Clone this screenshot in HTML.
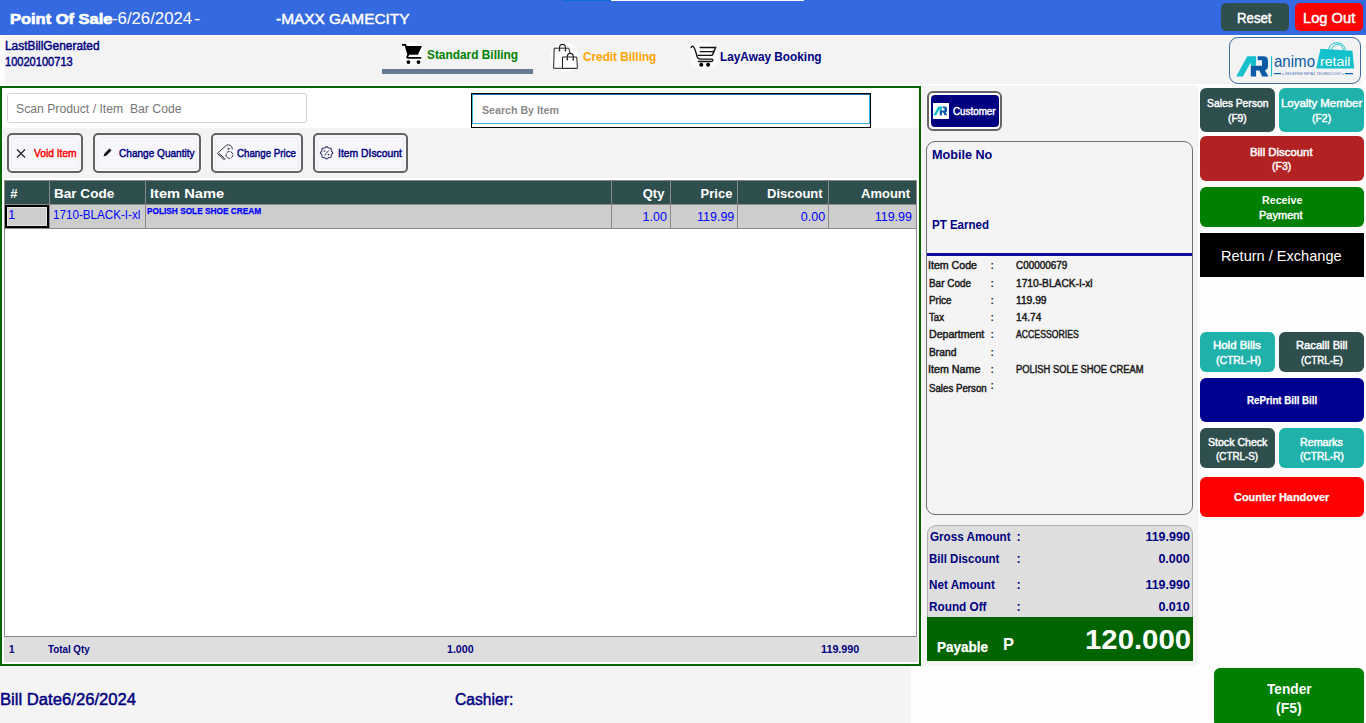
<!DOCTYPE html>
<html><head><meta charset="utf-8">
<style>
*{box-sizing:border-box}
html,body{margin:0;padding:0;width:1366px;height:723px;overflow:hidden;background:#fdfdfd;font-family:"Liberation Sans",sans-serif}
.a{position:absolute}
.t{position:absolute;line-height:1;white-space:pre}
.rb{position:absolute;border-radius:6px}
.ab{position:absolute;top:133px;height:40px;border:2px solid #636363;border-radius:5px;background:#f7f7fb}
.ab i{position:absolute;left:2px;right:2px;top:2px;bottom:2px;border-radius:3px;box-shadow:0 0 0 1px #eeeef2 inset}
</style></head><body>
<!-- header -->
<div class="a" style="left:0;top:0;width:1366px;height:35px;background:#3469e0"></div>
<div class="a" style="left:563px;top:0;width:48px;height:1px;background:#0b6fd2"></div>
<div class="a" style="left:611px;top:0;width:193px;height:1px;background:#fff"></div>
<div class="rb" style="left:1221px;top:3px;width:68px;height:28px;background:#2f4f4f;border-radius:5px"></div>
<div class="rb" style="left:1295px;top:3px;width:68px;height:28px;background:#ff0000;border-radius:5px"></div>
<!-- subheader -->
<div class="a" style="left:5px;top:37px;width:1356px;height:47px;background:#f3f3f3"></div>
<div class="a" style="left:382px;top:69px;width:151px;height:5px;background:#647b91"></div>
<!-- tab icons -->
<div class="a" style="left:400px;top:42px;width:24px;height:24px;border-radius:50%;background:#fbfbfb"></div>
<svg class="a" style="left:396px;top:40px" width="32" height="28" viewBox="0 0 32 28">
 <path d="M6 4.9H9.4L12.5 15" fill="none" stroke="#000" stroke-width="1.9" stroke-linejoin="round"/>
 <path d="M9.7 6H25.9L25.3 7.6L21.8 14.8H12.4Z" fill="#000"/>
 <path d="M12.4 14.6L11.3 16.6Q10.8 17.9 12.3 17.9H24.6" fill="none" stroke="#000" stroke-width="1.8" stroke-linecap="round"/>
 <circle cx="12.4" cy="22.1" r="1.9" fill="#000"/><circle cx="22.5" cy="22.1" r="1.9" fill="#000"/>
</svg>
<div class="a" style="left:550px;top:42px;width:30px;height:30px;border-radius:50%;background:#fbfbfb"></div>
<svg class="a" style="left:548px;top:40px" width="34" height="32" viewBox="0 0 34 32">
 <path d="M6.2 8.2H20.8L22 13M6.2 8.2L5.6 28.3H29" fill="none" stroke="#222" stroke-width="1"/>
 <path d="M11.5 10.5V8A3 3.6 0 0 1 17.5 8V10.5" fill="none" stroke="#222" stroke-width="1.1"/>
 <circle cx="11.5" cy="10.6" r="0.9" fill="#222"/><circle cx="17.4" cy="10.6" r="0.9" fill="#222"/>
 <path d="M14.5 17H28.8L29.4 28.3H14.5Z" fill="#fff" stroke="#222" stroke-width="1"/>
 <path d="M19.3 19.5V17A3 3.6 0 0 1 25.3 17V19.5" fill="none" stroke="#222" stroke-width="1.1"/>
 <circle cx="19.3" cy="19.6" r="0.9" fill="#222"/><circle cx="25.2" cy="19.6" r="0.9" fill="#222"/>
</svg>
<div class="a" style="left:690px;top:42px;width:28px;height:28px;border-radius:50%;background:#fbfbfb"></div>
<svg class="a" style="left:686px;top:40px" width="34" height="32" viewBox="0 0 34 32">
 <path d="M5.1 7.5Q6 5.6 7.2 6.5Q8.5 7.5 9.5 11L11.2 17Q12 19.2 14.5 19.2H25.8Q27 19.4 26.8 20.5Q26.5 21.5 25 21.5H12.4" fill="none" stroke="#111" stroke-width="1.3" stroke-linecap="round"/>
 <path d="M14.2 7.5H29.6L26.5 14.8Q26 15.4 25 15.4H12" fill="none" stroke="#111" stroke-width="1.4" stroke-linecap="round"/>
 <path d="M14.2 11.6H28" fill="none" stroke="#111" stroke-width="1.3" stroke-linecap="round"/>
 <circle cx="15.3" cy="24.8" r="2" fill="#000"/><circle cx="22.1" cy="24.8" r="2" fill="#000"/>
</svg>
<!-- logo box -->
<div class="a" style="left:1229px;top:37px;width:132px;height:47px;border:1.2px solid #3d6b9e;border-radius:9px;background:#f3f3f3"></div>
<svg class="a" style="left:1234px;top:42px" width="124" height="38" viewBox="0 0 124 38">
 <path d="M2.2 34.6L13.3 14.2H22.1V23.7H16.8V20.4L8.9 34.6Z" fill="#14c0cc"/>
 <path d="M23.7 14.2H29.5Q34 14.2 34 19V24Q34 27.5 31 28.3L34.4 34.6H28.2L25.4 28.5H22.1V34.6H16.8V23.7H28V18.2H23.7Z" fill="#0a5aa8"/>
 <rect x="37" y="14.2" width="1.1" height="20.4" fill="#14c0cc"/>
 <text x="40" y="25.4" font-family="Liberation Sans" font-size="16" fill="#0a5aa8" textLength="41" lengthAdjust="spacingAndGlyphs">animo</text>
 <path d="M86.5 6.7L118.5 8.8L120.1 26.5H82.2Z" fill="#14c0cc"/>
 <path d="M94.5 7.5Q96 0.8 103 0.8Q110 0.8 111.6 8.5M97.5 7.8Q99 2.5 103.5 2.5Q108.5 2.5 109.5 8.5" fill="none" stroke="#14c0cc" stroke-width="1"/>
 <text x="86" y="23.8" font-family="Liberation Sans" font-size="12.5" fill="#fff" textLength="30.5" lengthAdjust="spacingAndGlyphs">retail</text>
 <rect x="40" y="31" width="7" height="1.2" fill="#0a5aa8"/><rect x="111" y="31" width="8" height="1.2" fill="#0a5aa8"/>
 <text x="48" y="32.8" font-family="Liberation Sans" font-size="3.6" fill="#3d6fb8" textLength="62" lengthAdjust="spacingAndGlyphs">= REDEFINE RETAIL TECHNOLOGY =</text>
</svg>
<!-- main left panel -->
<div class="a" style="left:0;top:86px;width:921px;height:580px;border:2px solid #006400;background:#fff"></div>
<div class="a" style="left:3px;top:128px;width:916px;height:50px;background:#f3f3f3"></div>
<div class="a" style="left:7px;top:93px;width:300px;height:30px;border:1px solid #d2d2d2;border-radius:3px;background:#fff"></div>
<div class="a" style="left:471px;top:93px;width:400px;height:35px;border:1px solid #000;background:#fff"></div>
<div class="a" style="left:472px;top:94px;width:398px;height:30px;border:1px solid #3aaee0;border-top-color:#1f6fb0;background:#fff"></div>
<!-- action buttons -->
<div class="ab" style="left:7px;width:76px"><i></i></div>
<div class="ab" style="left:93px;width:108px"><i></i></div>
<div class="ab" style="left:211px;width:92px"><i></i></div>
<div class="ab" style="left:313px;width:95px"><i></i></div>
<svg class="a" style="left:16px;top:149px" width="10" height="9" viewBox="0 0 10 9"><path d="M1 0.5l8 8M9 0.5l-8 8" stroke="#222" stroke-width="1.2"/></svg>
<svg class="a" style="left:102px;top:148px" width="10" height="10" viewBox="0 0 10 10"><path d="M1.5 8.5l1-3 5-5 2 2-5 5z" fill="#111"/></svg>
<svg class="a" style="left:210px;top:135px" width="30" height="30" viewBox="0 0 30 30">
 <path d="M7.3 18.4L16.5 10.2Q18.5 9.2 20.6 10.6Q22.4 12 22.3 14.5" fill="none" stroke="#333" stroke-width="1"/>
 <path d="M7.3 18.4L14 24.6L15.6 23.3M9 18.3L14.3 23.2" fill="none" stroke="#333" stroke-width="1"/>
 <circle cx="19.4" cy="19.9" r="3.4" fill="none" stroke="#333" stroke-width="1" stroke-dasharray="3.2 1"/>
 <circle cx="18.5" cy="13.8" r="0.95" fill="#333"/>
</svg>
<svg class="a" style="left:312px;top:140px" width="28" height="26" viewBox="0 0 28 26">
 <path d="M14.60 6.50 L16.59 8.00 L19.05 8.35 L19.40 10.81 L20.90 12.80 L19.40 14.79 L19.05 17.25 L16.59 17.60 L14.60 19.10 L12.61 17.60 L10.15 17.25 L9.80 14.79 L8.30 12.80 L9.80 10.81 L10.15 8.35 L12.61 8.00Z" fill="none" stroke="#3a3a6e" stroke-width="1.1" stroke-linejoin="round"/>
 <path d="M12.4 15.4L16.8 10.4" stroke="#3a3a6e" stroke-width="1"/><circle cx="12.5" cy="11" r="0.85" fill="#3a3a6e"/><circle cx="16.5" cy="14.6" r="0.85" fill="#3a3a6e"/>
</svg>
<!-- grid -->
<div class="a" style="left:4px;top:180px;width:913px;height:457px;border:1px solid #8a8a8a;background:#fff"></div>
<div class="a" style="left:5px;top:181px;width:911px;height:23px;background:#2f4f4f"></div>
<div class="a" style="left:5px;top:204px;width:911px;height:25px;background:#cdcdcd;border-top:1px solid #8a8a8a;border-bottom:1px solid #8a8a8a"></div>
<div class="a" style="left:49px;top:181px;width:1px;height:47px;background:#8a8a8a"></div>
<div class="a" style="left:145px;top:181px;width:1px;height:47px;background:#8a8a8a"></div>
<div class="a" style="left:611px;top:181px;width:1px;height:47px;background:#8a8a8a"></div>
<div class="a" style="left:670px;top:181px;width:1px;height:47px;background:#8a8a8a"></div>
<div class="a" style="left:737px;top:181px;width:1px;height:47px;background:#8a8a8a"></div>
<div class="a" style="left:828px;top:181px;width:1px;height:47px;background:#8a8a8a"></div>
<div class="a" style="left:5px;top:205px;width:44px;height:23px;border:2px solid #000;box-shadow:inset 0 0 0 1px #e4e4e4"></div>
<div class="a" style="left:4px;top:637px;width:914px;height:25px;background:#dedede"></div>
<!-- bottom band -->
<div class="a" style="left:0;top:666px;width:911px;height:57px;background:#f4f4f4"></div>
<!-- right panel -->
<div class="a" style="left:922px;top:86px;width:276px;height:580px;background:#f4f4f4"></div>
<div class="a" style="left:927px;top:91px;width:75px;height:40px;border:2px solid #666;border-radius:6px;background:#fff"></div>
<div class="a" style="left:930.5px;top:94.5px;width:68px;height:32.5px;border-radius:4px;background:#000080"></div>
<div class="a" style="left:933px;top:103px;width:16px;height:16px;background:#fff"></div>
<svg class="a" style="left:933px;top:103px" width="16" height="16" viewBox="0 0 16 16">
 <g transform="translate(-0.55 -2.7) scale(0.43)">
 <path d="M2.2 34.6L13.3 14.2H22.1V23.7H16.8V20.4L8.9 34.6Z" fill="#14c0cc"/>
 <path d="M23.7 14.2H29.5Q34 14.2 34 19V24Q34 27.5 31 28.3L34.4 34.6H28.2L25.4 28.5H22.1V34.6H16.8V23.7H28V18.2H23.7Z" fill="#0a5aa8"/>
 </g>
</svg>
<div class="a" style="left:926px;top:141px;width:267px;height:374px;border:1px solid #707070;border-radius:9px;background:#f4f4f4"></div>
<div class="a" style="left:927px;top:253px;width:265px;height:3px;background:#0c0c9a"></div>
<div class="a" style="left:927px;top:525px;width:266px;height:136px;border:1px solid #b0b0b0;border-bottom:none;border-radius:9px 9px 0 0;background:#dedede"></div>
<div class="a" style="left:927px;top:617px;width:266px;height:44px;background:#006400"></div>
<!-- right buttons -->
<div class="rb" style="left:1200px;top:88px;width:75px;height:44px;background:#2f4f4f"></div>
<div class="rb" style="left:1279px;top:88px;width:85px;height:44px;background:#20b2aa"></div>
<div class="rb" style="left:1200px;top:136px;width:164px;height:45px;background:#b22222"></div>
<div class="rb" style="left:1200px;top:187px;width:164px;height:40px;background:#008000"></div>
<div class="a" style="left:1200px;top:233px;width:164px;height:44px;background:#000"></div>
<div class="rb" style="left:1200px;top:332px;width:75px;height:40px;background:#20b2aa"></div>
<div class="rb" style="left:1279px;top:332px;width:85px;height:40px;background:#2f4f4f"></div>
<div class="rb" style="left:1200px;top:378px;width:164px;height:44px;background:#000090"></div>
<div class="rb" style="left:1200px;top:428px;width:75px;height:40px;background:#2f4f4f"></div>
<div class="rb" style="left:1279px;top:428px;width:85px;height:40px;background:#20b2aa"></div>
<div class="rb" style="left:1200px;top:477px;width:164px;height:40px;background:#ff0000"></div>
<div class="rb" style="left:1214px;top:668px;width:150px;height:60px;background:#008000"></div>
<div class="t" id="t0" style="top:11px;font-size:15px;font-weight:700;color:#fff;left:9.70px;transform-origin:0 0;-webkit-text-stroke:0.7px currentColor;transform:scaleX(1.0978);">Point Of Sale</div>
<div class="t" id="t1" style="top:11px;font-size:16px;font-weight:400;color:#fff;left:111.95px;transform-origin:0 0;transform:scaleX(1.0467);">-6/26/2024</div>
<div class="t" id="t2" style="top:11px;font-size:16px;font-weight:400;color:#fff;left:193.82px;transform-origin:0 0;transform:scaleX(1.1750);">-</div>
<div class="t" id="t3" style="top:11px;font-size:15px;font-weight:400;color:#fff;left:275.70px;transform-origin:0 0;-webkit-text-stroke:0.45px currentColor;transform:scaleX(1.0269);">-MAXX GAMECITY</div>
<div class="t" id="t4" style="top:11px;font-size:14px;font-weight:400;color:#fff;left:1237.06px;transform-origin:0 0;-webkit-text-stroke:0.45px currentColor;transform:scaleX(0.9444);">Reset</div>
<div class="t" id="t5" style="top:11px;font-size:14px;font-weight:400;color:#fff;left:1302.55px;transform-origin:0 0;-webkit-text-stroke:0.45px currentColor;transform:scaleX(1.0490);">Log Out</div>
<div class="t" id="t6" style="top:40px;font-size:12.5px;font-weight:400;color:#000080;left:4.75px;transform-origin:0 0;-webkit-text-stroke:0.45px currentColor;transform:scaleX(0.9520);">LastBillGenerated</div>
<div class="t" id="t7" style="top:56px;font-size:12.5px;font-weight:400;color:#000080;left:4.71px;transform-origin:0 0;-webkit-text-stroke:0.45px currentColor;transform:scaleX(0.8853);">10020100713</div>
<div class="t" id="t8" style="top:48px;font-size:13px;font-weight:700;color:#008000;left:426.59px;transform-origin:0 0;transform:scaleX(0.9133);">Standard Billing</div>
<div class="t" id="t9" style="top:50px;font-size:13px;font-weight:700;color:#ffa500;left:583.00px;transform-origin:0 0;transform:scaleX(0.9062);">Credit Billing</div>
<div class="t" id="t10" style="top:50px;font-size:13px;font-weight:700;color:#000080;left:720.09px;transform-origin:0 0;transform:scaleX(0.9091);">LayAway Booking</div>
<div class="t" id="t11" style="top:103px;font-size:12.5px;font-weight:400;color:#767676;left:15.82px;transform-origin:0 0;transform:scaleX(0.9762);">Scan Product / Item  Bar Code</div>
<div class="t" id="t12" style="top:105px;font-size:11px;font-weight:700;color:#8a8a8a;left:481.80px;transform-origin:0 0;transform:scaleX(0.9671);">Search By Item</div>
<div class="t" id="t13" style="top:148px;font-size:11px;font-weight:400;color:#ff0000;left:33.50px;transform-origin:0 0;-webkit-text-stroke:0.45px currentColor;transform:scaleX(0.9283);">Void Item</div>
<div class="t" id="t14" style="top:148px;font-size:11px;font-weight:400;color:#000080;left:119.00px;transform-origin:0 0;-webkit-text-stroke:0.45px currentColor;transform:scaleX(0.9157);">Change Quantity</div>
<div class="t" id="t15" style="top:148px;font-size:11px;font-weight:400;color:#000080;left:237.40px;transform-origin:0 0;-webkit-text-stroke:0.45px currentColor;transform:scaleX(0.8836);">Change Price</div>
<div class="t" id="t16" style="top:148px;font-size:11px;font-weight:400;color:#000080;left:337.96px;transform-origin:0 0;-webkit-text-stroke:0.45px currentColor;transform:scaleX(0.9418);">Item DIscount</div>
<div class="t" id="t17" style="top:187px;font-size:13px;font-weight:700;color:#fff;left:10.20px;transform-origin:0 0;">#</div>
<div class="t" id="t18" style="top:187px;font-size:13px;font-weight:700;color:#fff;left:54.26px;transform-origin:0 0;transform:scaleX(1.0429);">Bar Code</div>
<div class="t" id="t19" style="top:187px;font-size:13px;font-weight:700;color:#fff;left:150.17px;transform-origin:0 0;transform:scaleX(1.1266);">Item Name</div>
<div class="t" id="t20" style="top:187px;font-size:13px;font-weight:700;color:#fff;left:642.70px;transform-origin:0 0;">Qty</div>
<div class="t" id="t21" style="top:187px;font-size:13px;font-weight:700;color:#fff;left:700.60px;transform-origin:0 0;">Price</div>
<div class="t" id="t22" style="top:187px;font-size:13px;font-weight:700;color:#fff;left:767.00px;transform-origin:0 0;">Discount</div>
<div class="t" id="t23" style="top:187px;font-size:13px;font-weight:700;color:#fff;left:861.00px;transform-origin:0 0;">Amount</div>
<div class="t" id="t24" style="top:209px;font-size:12.5px;font-weight:400;color:#0000ff;left:8.20px;transform-origin:0 0;">1</div>
<div class="t" id="t25" style="top:209px;font-size:12.5px;font-weight:400;color:#0000ff;left:52.77px;transform-origin:0 0;transform:scaleX(0.9315);">1710-BLACK-I-xl</div>
<div class="t" id="t26" style="top:206px;font-size:9.5px;font-weight:700;color:#0000ff;left:146.50px;transform-origin:0 0;-webkit-text-stroke:0.25px currentColor;transform:scaleX(0.8718);">POLISH SOLE SHOE CREAM</div>
<div class="t" id="t27" style="top:211px;font-size:12.5px;font-weight:400;color:#0000ff;left:642.60px;transform-origin:0 0;">1.00</div>
<div class="t" id="t28" style="top:211px;font-size:12.5px;font-weight:400;color:#0000ff;left:697.00px;transform-origin:0 0;">119.99</div>
<div class="t" id="t29" style="top:211px;font-size:12.5px;font-weight:400;color:#0000ff;left:800.80px;transform-origin:0 0;">0.00</div>
<div class="t" id="t30" style="top:211px;font-size:12.5px;font-weight:400;color:#0000ff;left:874.70px;transform-origin:0 0;">119.99</div>
<div class="t" id="t31" style="top:645px;font-size:10px;font-weight:700;color:#000080;left:8.90px;transform-origin:0 0;">1</div>
<div class="t" id="t32" style="top:645px;font-size:10px;font-weight:700;color:#000080;left:48.00px;transform-origin:0 0;transform:scaleX(0.9767);">Total Qty</div>
<div class="t" id="t33" style="top:645px;font-size:10px;font-weight:700;color:#000080;left:446.84px;transform-origin:0 0;transform:scaleX(1.0625);">1.000</div>
<div class="t" id="t34" style="top:645px;font-size:10px;font-weight:700;color:#000080;left:820.92px;transform-origin:0 0;transform:scaleX(1.0765);">119.990</div>
<div class="t" id="t35" style="top:692px;font-size:16px;font-weight:400;color:#000080;left:-0.34px;transform-origin:0 0;-webkit-text-stroke:0.45px currentColor;transform:scaleX(1.0408);">Bill Date6/26/2024</div>
<div class="t" id="t36" style="top:692px;font-size:16px;font-weight:400;color:#000080;left:454.72px;transform-origin:0 0;-webkit-text-stroke:0.45px currentColor;transform:scaleX(0.9776);">Cashier:</div>
<div class="t" id="t37" style="top:106px;font-size:10.5px;font-weight:400;color:#fff;left:952.90px;transform-origin:0 0;-webkit-text-stroke:0.45px currentColor;transform:scaleX(0.9348);">Customer</div>
<div class="t" id="t38" style="top:149px;font-size:12.5px;font-weight:700;color:#000080;left:931.59px;transform-origin:0 0;transform:scaleX(1.0103);">Mobile No</div>
<div class="t" id="t39" style="top:219px;font-size:12.5px;font-weight:700;color:#000080;left:931.78px;transform-origin:0 0;transform:scaleX(0.9217);">PT Earned</div>
<div class="t" id="t40" style="top:261px;font-size:10px;font-weight:400;color:#1a1a1a;left:928.34px;transform-origin:0 0;-webkit-text-stroke:0.45px currentColor;transform:scaleX(1.0622);">Item Code</div>
<div class="t" id="t41" style="top:261px;font-size:10px;font-weight:700;color:#1a1a1a;left:990.40px;transform-origin:0 0;">:</div>
<div class="t" id="t42" style="top:261px;font-size:10px;font-weight:400;color:#1a1a1a;left:1015.60px;transform-origin:0 0;-webkit-text-stroke:0.45px currentColor;transform:scaleX(0.9923);">C00000679</div>
<div class="t" id="t43" style="top:279px;font-size:10px;font-weight:400;color:#1a1a1a;left:929.40px;transform-origin:0 0;-webkit-text-stroke:0.45px currentColor;transform:scaleX(0.9929);">Bar Code</div>
<div class="t" id="t44" style="top:279px;font-size:10px;font-weight:700;color:#1a1a1a;left:990.40px;transform-origin:0 0;">:</div>
<div class="t" id="t45" style="top:279px;font-size:10px;font-weight:400;color:#1a1a1a;left:1015.60px;transform-origin:0 0;-webkit-text-stroke:0.45px currentColor;transform:scaleX(1.0213);">1710-BLACK-I-xl</div>
<div class="t" id="t46" style="top:296px;font-size:10px;font-weight:400;color:#1a1a1a;left:929.40px;transform-origin:0 0;-webkit-text-stroke:0.45px currentColor;transform:scaleX(0.9913);">Price</div>
<div class="t" id="t47" style="top:296px;font-size:10px;font-weight:700;color:#1a1a1a;left:990.40px;transform-origin:0 0;">:</div>
<div class="t" id="t48" style="top:296px;font-size:10px;font-weight:400;color:#1a1a1a;left:1015.60px;transform-origin:0 0;-webkit-text-stroke:0.45px currentColor;transform:scaleX(1.0233);">119.99</div>
<div class="t" id="t49" style="top:313px;font-size:10px;font-weight:400;color:#1a1a1a;left:929.40px;transform-origin:0 0;-webkit-text-stroke:0.45px currentColor;transform:scaleX(0.9625);">Tax</div>
<div class="t" id="t50" style="top:313px;font-size:10px;font-weight:700;color:#1a1a1a;left:990.40px;transform-origin:0 0;">:</div>
<div class="t" id="t51" style="top:313px;font-size:10px;font-weight:400;color:#1a1a1a;left:1015.60px;transform-origin:0 0;-webkit-text-stroke:0.45px currentColor;transform:scaleX(1.0120);">14.74</div>
<div class="t" id="t52" style="top:330px;font-size:10px;font-weight:400;color:#1a1a1a;left:929.40px;transform-origin:0 0;-webkit-text-stroke:0.45px currentColor;transform:scaleX(1.0566);">Department</div>
<div class="t" id="t53" style="top:330px;font-size:10px;font-weight:700;color:#1a1a1a;left:990.40px;transform-origin:0 0;">:</div>
<div class="t" id="t54" style="top:330px;font-size:10px;font-weight:400;color:#1a1a1a;left:1015.60px;transform-origin:0 0;-webkit-text-stroke:0.45px currentColor;transform:scaleX(0.8694);">ACCESSORIES</div>
<div class="t" id="t55" style="top:348px;font-size:10px;font-weight:400;color:#1a1a1a;left:929.40px;transform-origin:0 0;-webkit-text-stroke:0.45px currentColor;transform:scaleX(1.0269);">Brand</div>
<div class="t" id="t56" style="top:348px;font-size:10px;font-weight:700;color:#1a1a1a;left:990.40px;transform-origin:0 0;">:</div>
<div class="t" id="t57" style="top:365px;font-size:10px;font-weight:400;color:#1a1a1a;left:928.33px;transform-origin:0 0;-webkit-text-stroke:0.45px currentColor;transform:scaleX(1.0708);">Item Name</div>
<div class="t" id="t58" style="top:365px;font-size:10px;font-weight:700;color:#1a1a1a;left:990.40px;transform-origin:0 0;">:</div>
<div class="t" id="t59" style="top:365px;font-size:10px;font-weight:400;color:#1a1a1a;left:1015.60px;transform-origin:0 0;-webkit-text-stroke:0.45px currentColor;transform:scaleX(0.9368);">POLISH SOLE SHOE CREAM</div>
<div class="t" id="t60" style="top:384px;font-size:10px;font-weight:400;color:#1a1a1a;left:929.40px;transform-origin:0 0;-webkit-text-stroke:0.45px currentColor;transform:scaleX(0.9695);">Sales Person</div>
<div class="t" id="t61" style="top:381px;font-size:10px;font-weight:700;color:#1a1a1a;left:990.40px;transform-origin:0 0;">:</div>
<div class="t" id="t62" style="top:531px;font-size:12.5px;font-weight:700;color:#000080;left:930.40px;transform-origin:0 0;transform:scaleX(0.9326);">Gross Amount</div>
<div class="t" id="t63" style="top:531px;font-size:12.5px;font-weight:700;color:#000080;left:1016.40px;transform-origin:0 0;">:</div>
<div class="t" id="t64" style="top:553px;font-size:12.5px;font-weight:700;color:#000080;left:929.48px;transform-origin:0 0;transform:scaleX(0.9200);">Bill Discount</div>
<div class="t" id="t65" style="top:553px;font-size:12.5px;font-weight:700;color:#000080;left:1016.40px;transform-origin:0 0;">:</div>
<div class="t" id="t66" style="top:579px;font-size:12.5px;font-weight:700;color:#000080;left:929.47px;transform-origin:0 0;transform:scaleX(0.9348);">Net Amount</div>
<div class="t" id="t67" style="top:579px;font-size:12.5px;font-weight:700;color:#000080;left:1016.40px;transform-origin:0 0;">:</div>
<div class="t" id="t68" style="top:601px;font-size:12.5px;font-weight:700;color:#000080;left:929.46px;transform-origin:0 0;transform:scaleX(0.9417);">Round Off</div>
<div class="t" id="t69" style="top:601px;font-size:12.5px;font-weight:700;color:#000080;left:1016.40px;transform-origin:0 0;">:</div>
<div class="t" id="t70" style="top:531px;font-size:12.5px;font-weight:700;color:#000080;left:1145.40px;transform-origin:0 0;">119.990</div>
<div class="t" id="t71" style="top:553px;font-size:12.5px;font-weight:700;color:#000080;left:1158.40px;transform-origin:0 0;">0.000</div>
<div class="t" id="t72" style="top:579px;font-size:12.5px;font-weight:700;color:#000080;left:1145.40px;transform-origin:0 0;">119.990</div>
<div class="t" id="t73" style="top:601px;font-size:12.5px;font-weight:700;color:#000080;left:1158.40px;transform-origin:0 0;">0.010</div>
<div class="t" id="t74" style="top:640px;font-size:14px;font-weight:700;color:#fff;left:936.63px;transform-origin:0 0;-webkit-text-stroke:0.25px currentColor;transform:scaleX(0.9654);">Payable</div>
<div class="t" id="t75" style="top:636px;font-size:16.5px;font-weight:700;color:#fff;left:1003.00px;transform-origin:0 0;">P</div>
<div class="t" id="t76" style="top:626px;font-size:27.5px;font-weight:700;color:#fff;left:1084.87px;transform-origin:0 0;transform:scaleX(1.0667);">120.000</div>
<div class="t" id="t77" style="top:98px;font-size:11px;font-weight:400;color:#fff;left:1207.00px;transform-origin:0 0;-webkit-text-stroke:0.45px currentColor;transform:scaleX(0.9385);">Sales Person</div>
<div class="t" id="t78" style="top:113px;font-size:11px;font-weight:400;color:#fff;left:1228.25px;transform-origin:0 0;-webkit-text-stroke:0.45px currentColor;transform:scaleX(0.9250);">(F9)</div>
<div class="t" id="t79" style="top:98px;font-size:11px;font-weight:400;color:#fff;left:1280.61px;transform-origin:0 0;-webkit-text-stroke:0.45px currentColor;transform:scaleX(1.0377);">Loyalty Member</div>
<div class="t" id="t80" style="top:113px;font-size:11px;font-weight:400;color:#fff;left:1312.10px;transform-origin:0 0;-webkit-text-stroke:0.45px currentColor;transform:scaleX(0.9500);">(F2)</div>
<div class="t" id="t81" style="top:147px;font-size:11px;font-weight:400;color:#fff;left:1249.97px;transform-origin:0 0;-webkit-text-stroke:0.45px currentColor;transform:scaleX(1.0333);">Bill Discount</div>
<div class="t" id="t82" style="top:161px;font-size:11px;font-weight:400;color:#fff;left:1272.45px;transform-origin:0 0;-webkit-text-stroke:0.45px currentColor;transform:scaleX(0.9550);">(F3)</div>
<div class="t" id="t83" style="top:195px;font-size:11px;font-weight:700;color:#fff;left:1261.63px;transform-origin:0 0;transform:scaleX(0.9700);">Receive</div>
<div class="t" id="t84" style="top:210px;font-size:11px;font-weight:400;color:#fff;left:1259.45px;transform-origin:0 0;-webkit-text-stroke:0.45px currentColor;transform:scaleX(1.0023);">Payment</div>
<div class="t" id="t85" style="top:248px;font-size:15px;font-weight:400;color:#fff;left:1221.33px;transform-origin:0 0;transform:scaleX(0.9707);">Return / Exchange</div>
<div class="t" id="t86" style="top:340px;font-size:11px;font-weight:400;color:#fff;left:1213.26px;transform-origin:0 0;-webkit-text-stroke:0.45px currentColor;transform:scaleX(1.0400);">Hold Bills</div>
<div class="t" id="t87" style="top:355px;font-size:11px;font-weight:400;color:#fff;left:1215.55px;transform-origin:0 0;-webkit-text-stroke:0.45px currentColor;transform:scaleX(0.9426);">(CTRL-H)</div>
<div class="t" id="t88" style="top:340px;font-size:11px;font-weight:400;color:#fff;left:1295.68px;transform-origin:0 0;-webkit-text-stroke:0.45px currentColor;transform:scaleX(1.0163);">Racalll Bill</div>
<div class="t" id="t89" style="top:355px;font-size:11px;font-weight:400;color:#fff;left:1300.70px;transform-origin:0 0;-webkit-text-stroke:0.45px currentColor;transform:scaleX(0.8894);">(CTRL-E)</div>
<div class="t" id="t90" style="top:396px;font-size:10px;font-weight:700;color:#fff;left:1247.00px;transform-origin:0 0;-webkit-text-stroke:0.25px currentColor;transform:scaleX(0.9722);">RePrint Bill Bill</div>
<div class="t" id="t91" style="top:437px;font-size:11px;font-weight:400;color:#fff;left:1207.70px;transform-origin:0 0;-webkit-text-stroke:0.45px currentColor;transform:scaleX(0.9613);">Stock Check</div>
<div class="t" id="t92" style="top:451px;font-size:11px;font-weight:400;color:#fff;left:1216.45px;transform-origin:0 0;-webkit-text-stroke:0.45px currentColor;transform:scaleX(0.8957);">(CTRL-S)</div>
<div class="t" id="t93" style="top:437px;font-size:11px;font-weight:400;color:#fff;left:1299.73px;transform-origin:0 0;-webkit-text-stroke:0.45px currentColor;transform:scaleX(0.9721);">Remarks</div>
<div class="t" id="t94" style="top:451px;font-size:11px;font-weight:400;color:#fff;left:1299.95px;transform-origin:0 0;-webkit-text-stroke:0.45px currentColor;transform:scaleX(0.9213);">(CTRL-R)</div>
<div class="t" id="t95" style="top:492px;font-size:11px;font-weight:700;color:#fff;left:1234.30px;transform-origin:0 0;-webkit-text-stroke:0.25px currentColor;transform:scaleX(0.9938);">Counter Handover</div>
<div class="t" id="t96" style="top:682px;font-size:14px;font-weight:700;color:#fff;left:1266.50px;transform-origin:0 0;transform:scaleX(0.9783);">Tender</div>
<div class="t" id="t97" style="top:701px;font-size:14px;font-weight:700;color:#fff;left:1276.00px;transform-origin:0 0;">(F5)</div>
</body></html>
